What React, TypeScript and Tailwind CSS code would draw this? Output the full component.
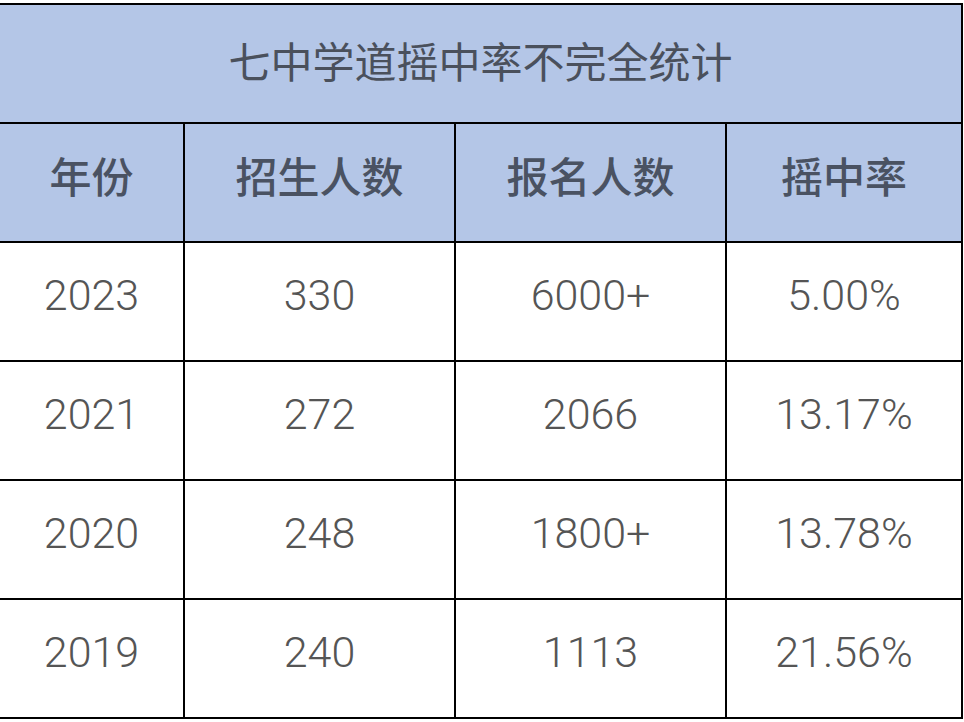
const headers = ['年份', '招生人数', '报名人数', '摇中率']

const rows = [
  ['2023', '330', '6000+', '5.00%'],
  ['2021', '272', '2066', '13.17%'],
  ['2020', '248', '1800+', '13.78%'],
  ['2019', '240', '1113', '21.56%'],
]

const cjk = { fontFamily: '"Noto Sans CJK SC", "Noto Sans", sans-serif' }
const num = { fontFamily: 'Roboto, "Noto Sans", sans-serif' }

export default function App() {
  return (
    <div className="h-[722px] w-[964px] bg-white pt-[3px]">
      <div className="w-[963px] border-y-2 border-r-2 border-black">
        {/* Title */}
        <div
          className="flex h-[117px] items-center justify-center bg-[#b4c6e7] pb-[8px] text-[42px] font-normal text-[#4a505c]"
          style={cjk}
        >
          七中学道摇中率不完全统计
        </div>

        {/* Header */}
        <div className="grid h-[119px] grid-cols-[183px_271px_271px_1fr] border-t-2 border-black bg-[#b4c6e7]">
          {headers.map((h, i) => (
            <div
              key={h}
              className={`flex items-center justify-center pb-[16px] text-[42px] font-medium text-[#4a5262] ${i > 0 ? 'border-l-2 border-black' : ''}`}
              style={cjk}
            >
              {h}
            </div>
          ))}
        </div>

        {/* Data */}
        {rows.map((r) => (
          <div key={r[0]} className="grid h-[119px] grid-cols-[183px_271px_271px_1fr] border-t-2 border-black">
            {r.map((c, i) => (
              <div
                key={i}
                className={`flex items-center justify-center pb-[12px] text-[43px] font-light text-[#555555] ${i > 0 ? 'border-l-2 border-black' : ''}`}
                style={num}
              >
                {c}
              </div>
            ))}
          </div>
        ))}
      </div>
    </div>
  )
}
